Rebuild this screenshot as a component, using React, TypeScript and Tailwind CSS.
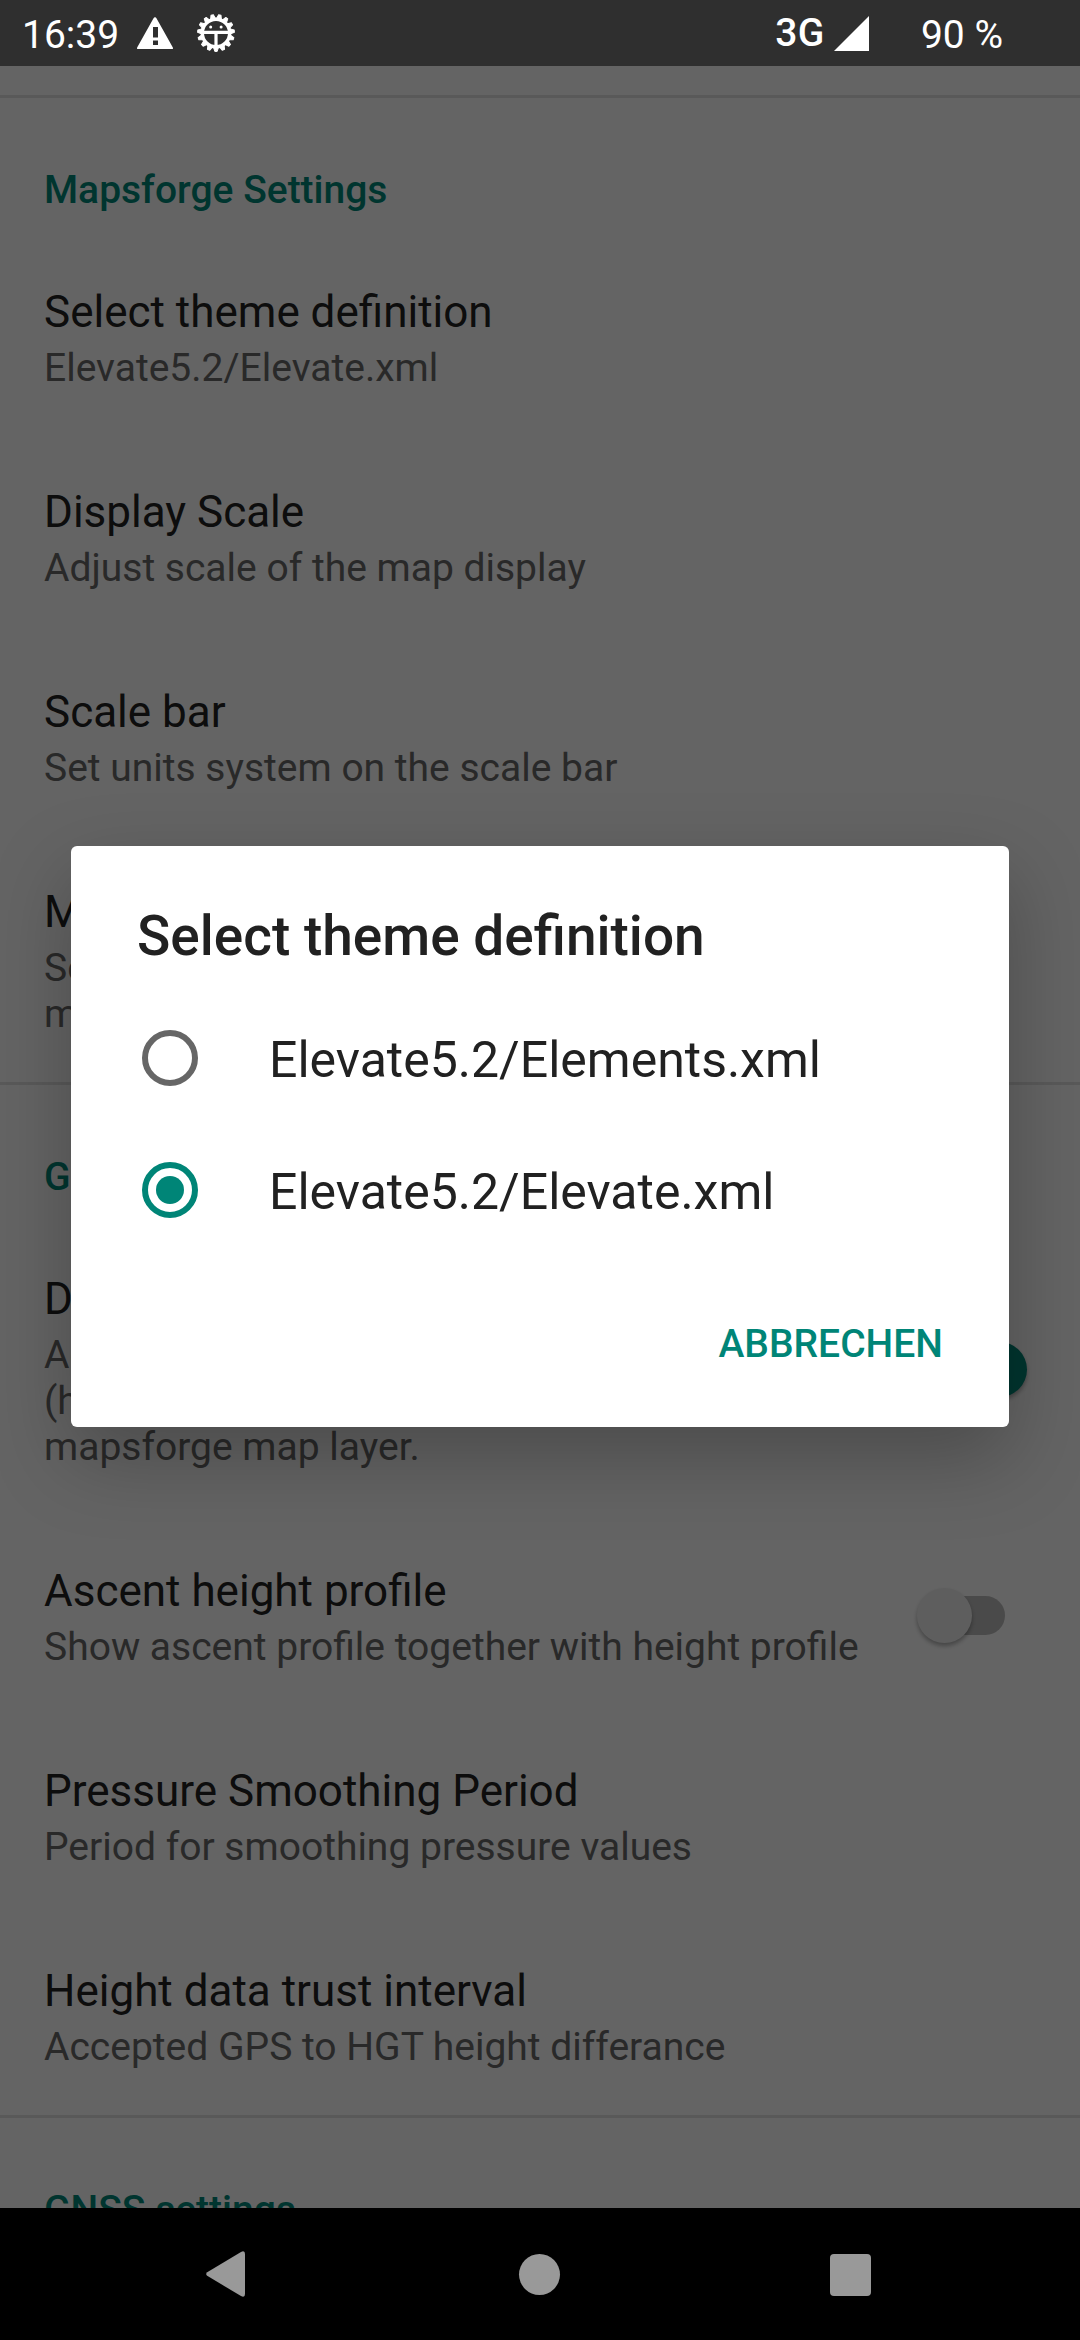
import React from "react";

const TOOTH_ANGLES = Array.from({ length: 15 }, (_, i) => i * 24 + 12);

function WarningIcon() {
  return (
    <svg className="ml-[19px] h-8 w-9 shrink-0" viewBox="0 0 36 32" fill="#fff">
      <path
        fillRule="evenodd"
        d="M18 0.2 Q19 0.2 19.6 1.4 L35.7 30.2 Q36.6 32 34.9 32 H1.1 Q-0.6 32 0.3 30.2 L16.4 1.4 Q17 0.2 18 0.2Z M16 10 V20.5 H21 V10Z M16 23.5 V28 H21 V23.5Z"
      />
    </svg>
  );
}

function BugGearIcon() {
  return (
    <svg className="ml-[23px] size-10 shrink-0" viewBox="-20 -20 40 40">
      {TOOTH_ANGLES.map((a) => (
        <path
          key={a}
          d="M-2.4 -14.5 L-1.2 -18.4 H1.2 L2.4 -14.5Z"
          fill="#fff"
          stroke="#fff"
          strokeLinejoin="round"
          transform={`rotate(${a})`}
        />
      ))}
      <circle r="13.7" fill="none" stroke="#fff" strokeWidth="3.4" />
      <path d="M-13 -0.6 H13 M0 -0.5 V14" stroke="#fff" strokeWidth="3.2" />
      <circle cx="-5.3" cy="-5.9" r="1.5" fill="#fff" />
      <circle cx="5.1" cy="-5.9" r="1.5" fill="#fff" />
    </svg>
  );
}

function StatusBar() {
  return (
    <header className="flex h-[66px] shrink-0 items-center bg-[#2f2f2f] text-[39px] leading-[46px] text-white">
      <span className="ml-[22px] mt-[3px] w-[96px] whitespace-nowrap">16:39</span>
      <WarningIcon />
      <BugGearIcon />
      <span className="-mt-px ml-auto font-medium tracking-[0.5px]">3G</span>
      <svg className="ml-[9px] h-[35px] w-[35px]" viewBox="0 0 35 35">
        <path d="M35 0 V35 H0Z" fill="#fff" />
      </svg>
      <span className="ml-[52px] mr-[77px] mt-[3px] whitespace-nowrap">90 %</span>
    </header>
  );
}

function Toggle({ on }: { on?: boolean }) {
  return (
    <div className="relative mr-[53px] flex h-[55px] w-[110px] shrink-0 items-center justify-center">
      <div className={on ? "h-[39px] w-[66px] rounded-full bg-[#80c2bb]" : "h-[39px] w-[66px] rounded-full bg-[#b9b9b9]"} />
      <div
        className={
          on
            ? "absolute right-0 top-0 size-[55px] rounded-full bg-[#008577] shadow-[0_3px_4px_rgba(0,0,0,0.3)]"
            : "absolute left-0 top-0 size-[55px] rounded-full bg-[#ececec] shadow-[0_3px_4px_rgba(0,0,0,0.3)]"
        }
      />
    </div>
  );
}

function Category({ children }: { children: React.ReactNode }) {
  return (
    <h2 className="border-t-3 border-[#dedede] px-11 pb-[23px] pt-[69px] text-[39px] font-medium leading-[46px] text-[#008577]">
      {children}
    </h2>
  );
}

function Preference({
  title,
  lines,
  toggle,
}: {
  title: string;
  lines: string[];
  toggle?: React.ReactNode;
}) {
  return (
    <div className="flex items-center justify-between">
      <div className="whitespace-nowrap pb-[45px] pl-11 pt-[50px]">
        <div className="text-[44px] leading-[52px] text-[#212121]">{title}</div>
        <div className="mt-[7px] text-[39px] leading-[46px] text-[#666666]">
          {lines.map((line) => (
            <div key={line}>{line}</div>
          ))}
        </div>
      </div>
      {toggle}
    </div>
  );
}

function RadioRow({ label, checked }: { label: string; checked?: boolean }) {
  return (
    <div className="flex h-[132px] items-center pl-[71px]">
      <div
        className={
          checked
            ? "flex size-[56px] items-center justify-center rounded-full border-6 border-[#008577]"
            : "flex size-[56px] items-center justify-center rounded-full border-6 border-[#666666]"
        }
      >
        {checked && <div className="size-7 rounded-full bg-[#008577]" />}
      </div>
      <span className="ml-[71px] mt-[3px] text-[50px] leading-[58px] text-[#212121]">{label}</span>
    </div>
  );
}

function ThemeDialog() {
  return (
    <div className="flex h-[581px] w-[938px] flex-col rounded-[6px] bg-white shadow-[0_30px_80px_rgba(0,0,0,0.25)]">
      <h1 className="px-[66px] pt-[58px] text-[55px] font-medium leading-[64px] text-[#212121]">
        Select theme definition
      </h1>
      <div className="mt-6">
        <RadioRow label="Elevate5.2/Elements.xml" />
        <RadioRow label="Elevate5.2/Elevate.xml" checked />
      </div>
      <button className="mr-[66px] mt-[65px] self-end text-[39px] font-medium leading-[46px] text-[#008577]">
        ABBRECHEN
      </button>
    </div>
  );
}

function NavBar() {
  return (
    <nav className="flex h-[132px] shrink-0 items-center bg-black pl-[206px]">
      <svg className="h-[46px] w-[39px]" viewBox="0 0 39 46">
        <path
          d="M35 0.9 Q39 -1 39 3 V43 Q39 47 35 45.1 L1.2 24.8 Q-0.8 23 1.2 21.2Z"
          fill="#999"
        />
      </svg>
      <div className="ml-[274px] size-[41px] rounded-full bg-[#999999]" />
      <div className="ml-[270px] mt-px h-[42px] w-[41px] rounded-[4px] bg-[#999999]" />
    </nav>
  );
}

export default function App() {
  return (
    <div className="flex h-[2340px] w-[1080px] flex-col overflow-hidden bg-black font-['Roboto',sans-serif]">
      <StatusBar />
      <main className="relative h-[2142px] overflow-hidden bg-[#fafafa] pt-[29px]">
        <Category>Mapsforge Settings</Category>
        <Preference title="Select theme definition" lines={["Elevate5.2/Elevate.xml"]} />
        <Preference title="Display Scale" lines={["Adjust scale of the map display"]} />
        <Preference title="Scale bar" lines={["Set units system on the scale bar"]} />
        <Preference title="Map language" lines={["Select the preferred language for the", "map labels"]} />
        <Category>General</Category>
        <Preference
          title="Display hillshading"
          lines={["Adds a hillshading layer", "(height data required) to the", "mapsforge map layer."]}
          toggle={<Toggle on />}
        />
        <Preference
          title="Ascent height profile"
          lines={["Show ascent profile together with height profile"]}
          toggle={<Toggle />}
        />
        <Preference title="Pressure Smoothing Period" lines={["Period for smoothing pressure values"]} />
        <Preference title="Height data trust interval" lines={["Accepted GPS to HGT height differance"]} />
        <Category>GNSS settings</Category>
        <div className="absolute inset-0 flex items-start justify-center bg-black/60 pt-[780px]">
          <ThemeDialog />
        </div>
      </main>
      <NavBar />
    </div>
  );
}
